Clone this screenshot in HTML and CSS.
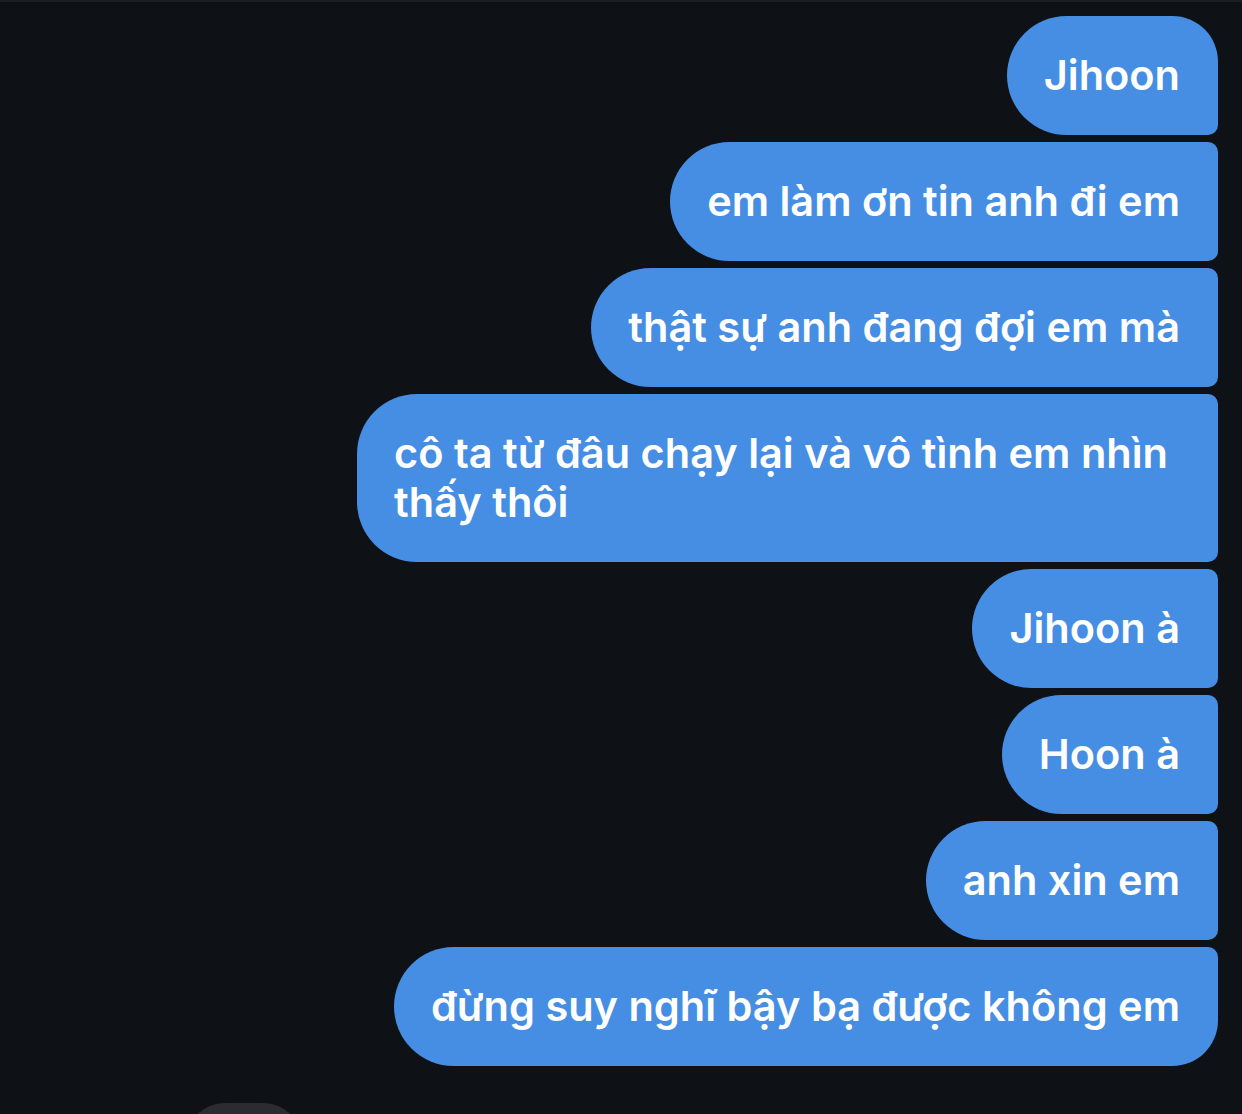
FILE: index.html
```html
<!DOCTYPE html>
<html lang="vi">
<head>
<meta charset="utf-8">
<title>Chat</title>
<link rel="stylesheet" href="styles.css">
</head>
<body>
<div class="screen">
  <div class="thread">
    <div class="bubble">Jihoon</div>
    <div class="bubble">em làm ơn tin anh đi em</div>
    <div class="bubble">thật sự anh đang đợi em mà</div>
    <div class="bubble">cô ta từ đâu chạy lại và vô tình em nhìn thấy thôi</div>
    <div class="bubble">Jihoon à</div>
    <div class="bubble">Hoon à</div>
    <div class="bubble">anh xin em</div>
    <div class="bubble">đừng suy nghĩ bậy bạ được không em</div>
  </div>
  <div class="peek"></div>
</div>
</body>
</html>
```

FILE: styles.css
```css
html, body {
  margin: 0;
  padding: 0;
  background: #0e1116;
  overflow: hidden;
}
.screen {
  width: 1242px;
  height: 1114px;
  border-top: 2px solid #1b1e23;
  box-sizing: border-box;
  overflow: hidden;
  font-family: "Inter", "Noto Sans", sans-serif;
}
.thread {
  display: flex;
  flex-direction: column;
  align-items: flex-end;
  gap: 7px;
  padding: 14px 24px 0 0;
}
.bubble {
  background: #458ee3;
  color: #ffffff;
  font-size: 41.5px;
  font-weight: 600;
  line-height: 49px;
  padding: 35px 38px 35px 37px;
  max-width: 786px;
  border-radius: 60px 10px 10px 60px;
  box-sizing: content-box;
}
.bubble:first-child {
  border-top-right-radius: 46px;
}
.bubble:last-child {
  border-bottom-right-radius: 46px;
}
.peek {
  margin: 37px 0 0 185px;
  width: 118px;
  height: 80px;
  border-radius: 40px;
  background: #2a2c31;
}
```
